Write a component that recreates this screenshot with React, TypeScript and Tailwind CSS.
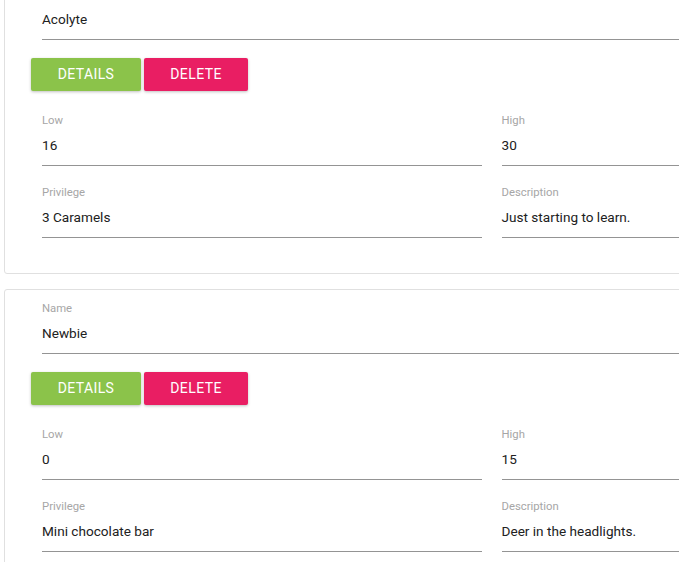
import React from "react";

type Rank = {
  name: string;
  low: string;
  high: string;
  privilege: string;
  description: string;
};

const ranks: Rank[] = [
  { name: "Acolyte", low: "16", high: "30", privilege: "3 Caramels", description: "Just starting to learn." },
  { name: "Newbie", low: "0", high: "15", privilege: "Mini chocolate bar", description: "Deer in the headlights." },
];

function Field({ label, value, className = "" }: { label: string; value: string; className?: string }) {
  return (
    <div className={"flex flex-col border-b border-[#949494] " + className}>
      <div className="text-[11.3px] leading-4 text-[#a6a6a6]">{label}</div>
      <div className="mt-[6px] pb-[10px] text-[13.6px] leading-5 text-[#212121]">{value}</div>
    </div>
  );
}

function Card({ rank }: { rank: Rank }) {
  return (
    <div className="w-[975px] h-[299px] rounded-[3px] border border-[#e0e0e0] bg-white pt-[11px]">
      <div className="pl-[37px] pr-[37px]">
        <Field label="Name" value={rank.name} />
      </div>
      <div className="mt-[18px] flex gap-[3px] pl-[26px]">
        <button className="h-[33px] w-[110px] rounded-[2px] bg-[#8bc34a] text-[14px] uppercase tracking-[0.4px] text-white shadow-[0_1px_3px_rgba(0,0,0,0.25)]">
          Details
        </button>
        <button className="h-[33px] w-[104px] rounded-[2px] bg-[#e91e63] text-[14px] uppercase tracking-[0.4px] text-white shadow-[0_1px_3px_rgba(0,0,0,0.25)]">
          Delete
        </button>
      </div>
      <div className="mt-[22px] grid grid-cols-2 gap-x-[20px] gap-y-[19px] pl-[37px] pr-[37px]">
        <Field label="Low" value={rank.low} />
        <Field label="High" value={rank.high} />
        <Field label="Privilege" value={rank.privilege} />
        <Field label="Description" value={rank.description} />
      </div>
    </div>
  );
}

export default function App() {
  return (
    <div
      className="h-[562px] w-[679px] overflow-hidden bg-white"
      style={{ fontFamily: "Roboto, 'Liberation Sans', sans-serif" }}
    >
      <div className="-mt-[25px] ml-[4px] flex flex-col gap-[15px]">
        {ranks.map((r) => (
          <Card key={r.name} rank={r} />
        ))}
      </div>
    </div>
  );
}
